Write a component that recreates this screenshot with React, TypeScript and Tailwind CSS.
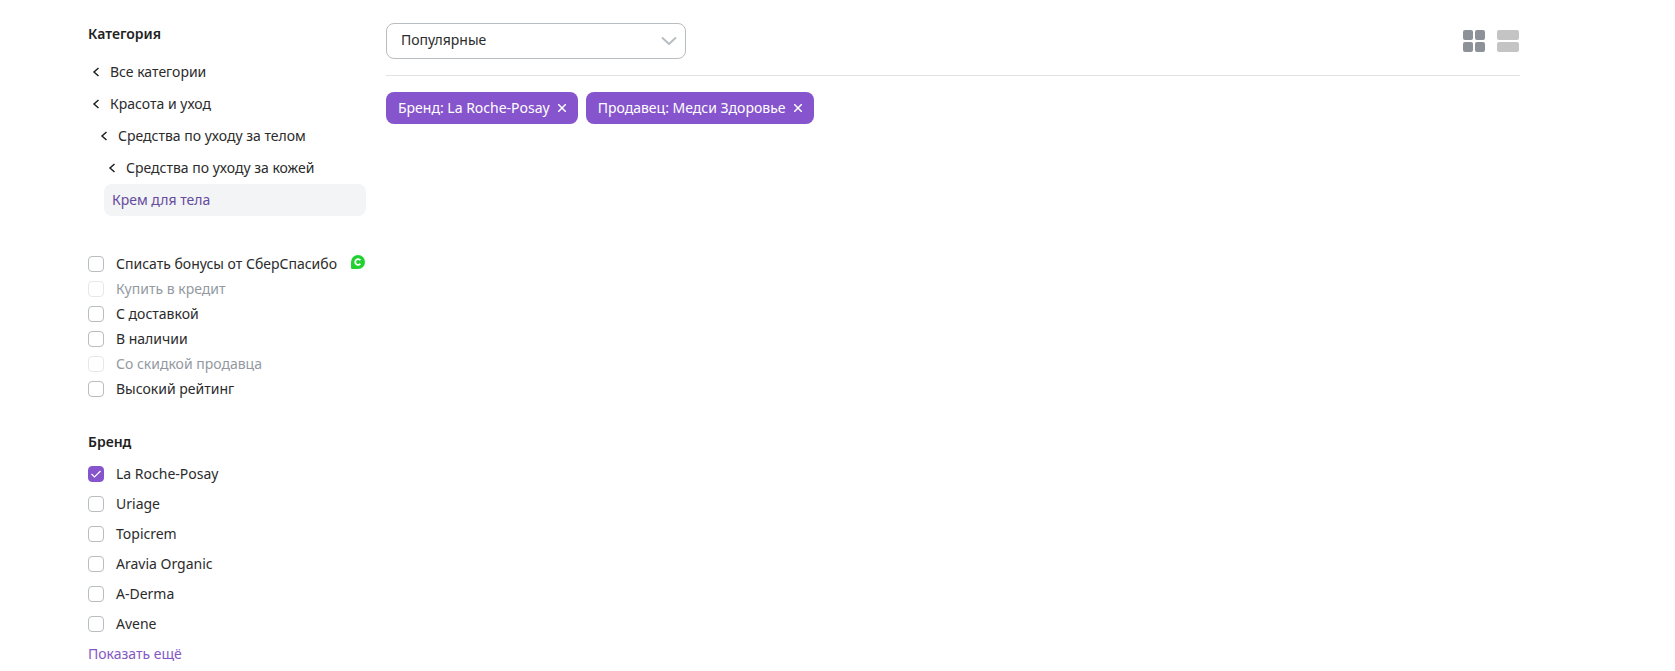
import { useState } from "react";
import type { ReactNode } from "react";

const categories = [
  { label: "Все категории", indent: "pl-1" },
  { label: "Красота и уход", indent: "pl-1" },
  { label: "Средства по уходу за телом", indent: "pl-3" },
  { label: "Средства по уходу за кожей", indent: "pl-5" },
];

const options = [
  { label: "Списать бонусы от СберСпасибо", bonus: true },
  { label: "Купить в кредит", disabled: true },
  { label: "С доставкой" },
  { label: "В наличии" },
  { label: "Со скидкой продавца", disabled: true },
  { label: "Высокий рейтинг" },
];

const brands = ["La Roche-Posay", "Uriage", "Topicrem", "Aravia Organic", "A-Derma", "Avene"];

function BonusIcon() {
  return (
    <svg className="w-[14px] h-[14px] mb-1 mr-px" viewBox="0 0 14 14" fill="none" aria-hidden="true">
      <path d="M7 0a7 7 0 1 1 0 14H1.2A1.2 1.2 0 0 1 0 12.8V7a7 7 0 0 1 7-7Z" fill="#21d12f" />
      <path d="M9.4 5.2A2.9 2.9 0 1 0 9.4 8.8" stroke="white" strokeWidth="1.8" />
    </svg>
  );
}

interface CheckRowProps {
  checked: boolean;
  onChange: () => void;
  disabled?: boolean;
  className: string;
  children: ReactNode;
}

function CheckRow({ checked, onChange, disabled, className, children }: CheckRowProps) {
  return (
    <label className={`flex items-center ${className} ${disabled ? "text-[#93999f]" : "cursor-pointer"}`}>
      <span className="grid shrink-0">
        <input
          type="checkbox"
          checked={checked}
          onChange={onChange}
          disabled={disabled}
          className="peer col-start-1 row-start-1 appearance-none w-4 h-4 rounded border border-[#b8bdc1] bg-white checked:bg-[#8654cc] checked:border-[#8654cc] disabled:border-[#e5e7e9]"
        />
        <svg className="col-start-1 row-start-1 w-4 h-4 pointer-events-none opacity-0 peer-checked:opacity-100" viewBox="0 0 16 16" fill="none" stroke="white" strokeWidth="1.2">
          <path d="M3.5 8l3 3 6-6" />
        </svg>
      </span>
      {children}
    </label>
  );
}

function Sidebar({ brand, toggleBrand }: { brand: string[]; toggleBrand: (name: string) => void }) {
  const [selected, setSelected] = useState<string[]>([]);

  const toggle = (label: string) =>
    setSelected((prev) => (prev.includes(label) ? prev.filter((l) => l !== label) : [...prev, label]));

  return (
    <aside className="w-[278px] shrink-0">
      <h2 className="font-semibold leading-5 text-[#1f1f1f]">Категория</h2>
      <nav className="mt-3 flex flex-col">
        {categories.map((c) => (
          <a key={c.label} href="#" className={`flex items-center gap-2.5 h-8 ${c.indent}`}>
            <svg className="w-2 h-2.5" viewBox="0 0 8 10" fill="none" stroke="#1f1f1f" strokeWidth="1.5">
              <path d="M6.5 1L2 5l4.5 4" />
            </svg>
            {c.label}
          </a>
        ))}
        <a href="#" className="flex items-center h-8 ml-4 pl-2 rounded-lg bg-[#f2f4f6] text-[#654a9e]">
          Крем для тела
        </a>
      </nav>

      {/* Options */}
      <div className="mt-[35px] flex flex-col">
        {options.map((o) => (
          <CheckRow
            key={o.label}
            checked={selected.includes(o.label)}
            onChange={() => toggle(o.label)}
            disabled={o.disabled}
            className="h-[25px] gap-3"
          >
            <span className="flex-1 whitespace-nowrap">{o.label}</span>
            {o.bonus && <BonusIcon />}
          </CheckRow>
        ))}
      </div>

      {/* Brands */}
      <h2 className="mt-[31px] font-semibold leading-5 text-[#1f1f1f]">Бренд</h2>
      <div className="mt-[7px] flex flex-col">
        {brands.map((b) => (
          <CheckRow key={b} checked={brand.includes(b)} onChange={() => toggleBrand(b)} className="h-[30px] gap-3">
            {b}
          </CheckRow>
        ))}
      </div>
      <button className="flex items-center h-[30px] text-[#8558c4] cursor-pointer">Показать ещё</button>
    </aside>
  );
}

function Tag({ label, onRemove }: { label: string; onRemove: () => void }) {
  return (
    <button onClick={onRemove} className="flex items-center gap-2 h-8 px-3 rounded-lg bg-[#8654cc] text-white cursor-pointer">
      {label}
      <svg className="w-2 h-2" viewBox="0 0 8 8" fill="none" stroke="white" strokeWidth="1.5" aria-hidden="true">
        <path d="M0 0l8 8M8 0L0 8" />
      </svg>
    </button>
  );
}

export default function App() {
  const [brand, setBrand] = useState(["La Roche-Posay"]);
  const [seller, setSeller] = useState("Медси Здоровье");

  const toggleBrand = (name: string) =>
    setBrand((prev) => (prev.includes(name) ? prev.filter((b) => b !== name) : [...prev, name]));

  return (
    <div className="flex gap-5 bg-white pl-[88px] pr-[155px] text-sm text-[#2b2b2b] font-['Noto_Sans',sans-serif]">
      <div className="pt-6">
        <Sidebar brand={brand} toggleBrand={toggleBrand} />
      </div>

      <main className="flex-1 min-w-0 pt-[23px]">
        {/* Toolbar */}
        <div className="flex items-center justify-between pb-4 border-b border-[#dfe3e6]">
          <div className="grid items-center w-[300px]">
            <select aria-label="Сортировка" className="col-start-1 row-start-1 appearance-none h-9 px-3.5 pb-0.5 rounded-lg border border-[#b8bdc1] bg-white">
              <option>Популярные</option>
              <option>Сначала дешевле</option>
              <option>Сначала дороже</option>
            </select>
            <svg className="col-start-1 row-start-1 justify-self-end mr-[9px] w-4 h-2 pointer-events-none" viewBox="0 0 16 8" fill="none" stroke="#b8bdc1" strokeWidth="2">
              <path d="M1 .5l7 6.5 7-6.5" />
            </svg>
          </div>
          <div className="flex gap-3 pr-px">
            <button aria-label="Плитка" className="cursor-pointer">
              <svg className="w-[22px] h-[22px]" viewBox="0 0 22 22" fill="#8d9298">
                <rect width="10" height="10" rx="2" />
                <rect x="12" width="10" height="10" rx="2" />
                <rect y="12" width="10" height="10" rx="2" />
                <rect x="12" y="12" width="10" height="10" rx="2" />
              </svg>
            </button>
            <button aria-label="Список" className="cursor-pointer">
              <svg className="w-[22px] h-[22px]" viewBox="0 0 22 22" fill="#c4c4c4">
                <rect width="22" height="10" rx="2" />
                <rect y="12" width="22" height="10" rx="2" />
              </svg>
            </button>
          </div>
        </div>

        {/* Active filters */}
        <div className="mt-4 flex flex-wrap gap-2">
          {brand.map((b) => (
            <Tag key={b} label={`Бренд: ${b}`} onRemove={() => toggleBrand(b)} />
          ))}
          {seller && <Tag label={`Продавец: ${seller}`} onRemove={() => setSeller("")} />}
        </div>
      </main>
    </div>
  );
}
